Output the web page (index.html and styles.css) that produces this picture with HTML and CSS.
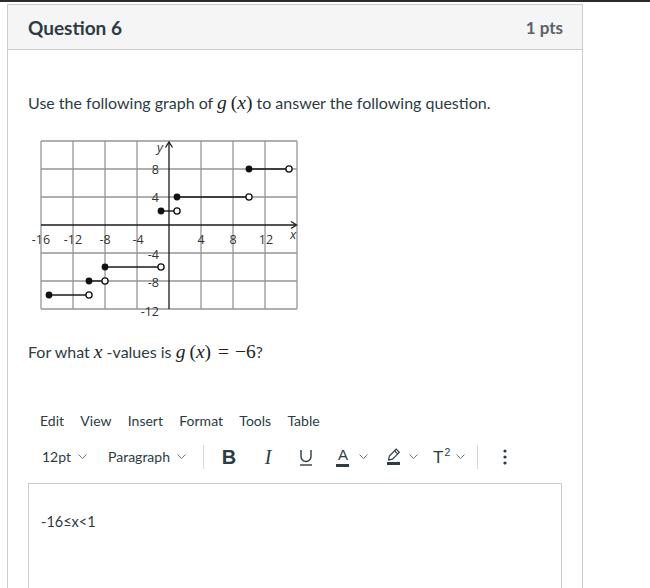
FILE: index.html
```html
<!DOCTYPE html>
<html>
<head>
<meta charset="utf-8">
<title>Question 6</title>
<link rel="stylesheet" href="styles.css">
</head>
<body>
<div class="topbar"></div>
<div class="page">
  <div class="card">
    <div class="card-header">
      <h2 class="q-title">Question 6</h2>
      <span class="pts">1 pts</span>
    </div>
    <div class="card-body">
      <p class="text p1">Use the following graph of <span class="math"><i class="mi">g</i><span class="mo lp">(</span><i class="mi">x</i><span class="mo">)</span></span> to answer the following question.</p>

      <svg class="graph" width="282" height="190" viewBox="28 135 282 190" xmlns="http://www.w3.org/2000/svg">
        <g class="grid">
          <line x1="41" y1="142" x2="41" y2="310"/>
          <line x1="73" y1="142" x2="73" y2="310"/>
          <line x1="105" y1="142" x2="105" y2="310"/>
          <line x1="137" y1="142" x2="137" y2="310"/>
          <line x1="201" y1="142" x2="201" y2="310"/>
          <line x1="233" y1="142" x2="233" y2="310"/>
          <line x1="265" y1="142" x2="265" y2="310"/>
          <line x1="297" y1="142" x2="297" y2="310"/>
          <line x1="41" y1="142" x2="297" y2="142"/>
          <line x1="41" y1="170" x2="297" y2="170"/>
          <line x1="41" y1="198" x2="297" y2="198"/>
          <line x1="41" y1="254" x2="297" y2="254"/>
          <line x1="41" y1="282" x2="297" y2="282"/>
          <line x1="41" y1="310" x2="297" y2="310"/>
        </g>
        <g class="labels">
          <text x="41" y="245" text-anchor="middle">-16</text>
          <text x="73" y="245" text-anchor="middle">-12</text>
          <text x="105" y="245" text-anchor="middle">-8</text>
          <text x="138" y="245" text-anchor="middle">-4</text>
          <text x="201" y="245" text-anchor="middle">4</text>
          <text x="233" y="245" text-anchor="middle">8</text>
          <text x="266" y="245" text-anchor="middle">12</text>
          <text x="159" y="175" text-anchor="end">8</text>
          <text x="159" y="203" text-anchor="end">4</text>
          <text x="159" y="260" text-anchor="end">-4</text>
          <text x="159" y="288" text-anchor="end">-8</text>
          <text x="159" y="317" text-anchor="end">-12</text>
          <text class="var" x="293" y="240" text-anchor="middle">x</text>
          <text class="var" x="160" y="153" text-anchor="middle">y</text>
        </g>
        <g class="axes">
          <line x1="41" y1="226" x2="296" y2="226"/>
          <path d="M291 222.5 L296.5 226 L291 229.5"/>
          <line x1="169" y1="310" x2="169" y2="143"/>
          <path d="M165.5 148.5 L169 143 L172.5 148.5"/>
        </g>
        <g class="segs">
          <line x1="249" y1="170" x2="289" y2="170"/>
          <line x1="177" y1="198" x2="249" y2="198"/>
          <line x1="161" y1="212" x2="177" y2="212"/>
          <line x1="105" y1="268" x2="161" y2="268"/>
          <line x1="89" y1="282" x2="105" y2="282"/>
          <line x1="49" y1="296" x2="89" y2="296"/>
        </g>
        <g class="closed">
          <circle cx="249" cy="170" r="3.4"/>
          <circle cx="177" cy="198" r="3.4"/>
          <circle cx="161" cy="212" r="3.4"/>
          <circle cx="105" cy="268" r="3.4"/>
          <circle cx="89" cy="282" r="3.4"/>
          <circle cx="49" cy="296" r="3.4"/>
        </g>
        <g class="open">
          <circle cx="289" cy="170" r="3.1"/>
          <circle cx="249" cy="198" r="3.1"/>
          <circle cx="177" cy="212" r="3.1"/>
          <circle cx="161" cy="268" r="3.1"/>
          <circle cx="105" cy="282" r="3.1"/>
          <circle cx="89" cy="296" r="3.1"/>
        </g>
      </svg>

      <p class="text p2">For what <span class="math"><i class="mi">x</i></span> -values is <span class="math"><i class="mi">g</i><span class="mo lp">(</span><i class="mi">x</i><span class="mo">)</span><span class="mo rel">=</span><span class="mo">−6</span></span>?</p>

      <div class="menubar">
        <span class="menu-item">Edit</span>
        <span class="menu-item">View</span>
        <span class="menu-item">Insert</span>
        <span class="menu-item">Format</span>
        <span class="menu-item">Tools</span>
        <span class="menu-item">Table</span>
      </div>

      <div class="toolbar">
        <span class="tb-text size">12pt</span>
        <svg class="chev ch-size" width="9" height="5" viewBox="0 0 9 5"><path d="M0.5 0.5 L4.5 4.5 L8.5 0.5"/></svg>
        <span class="tb-text para">Paragraph</span>
        <svg class="chev ch-para" width="9" height="5" viewBox="0 0 9 5"><path d="M0.5 0.5 L4.5 4.5 L8.5 0.5"/></svg>
        <span class="divider d1"></span>
        <span class="ic ic-b">B</span>
        <span class="ic ic-i">I</span>
        <svg class="ic ic-u" width="16" height="17" viewBox="0 0 16 17"><path d="M3 1 V7.5 A5 5 0 0 0 13 7.5 V1" fill="none"/><line x1="2" y1="16" x2="14" y2="16"/></svg>
        <span class="ic ic-a"><span class="a-glyph">A</span><span class="a-bar"></span></span>
        <svg class="chev ch-a" width="9" height="5" viewBox="0 0 9 5"><path d="M0.5 0.5 L4.5 4.5 L8.5 0.5"/></svg>
        <svg class="ic ic-hl" width="15" height="18" viewBox="0 0 15 18"><path d="M10.2 1.2 L13.3 4.3 L6.5 11.1 L2.6 12 L3.4 8 Z" fill="none"/><line x1="8.6" y1="2.8" x2="11.7" y2="5.9"/><rect x="1" y="14" width="13" height="3" class="hl-bar"/></svg>
        <svg class="chev ch-hl" width="9" height="5" viewBox="0 0 9 5"><path d="M0.5 0.5 L4.5 4.5 L8.5 0.5"/></svg>
        <span class="ic ic-t">T<sup class="sup2">2</sup></span>
        <svg class="chev ch-t" width="9" height="5" viewBox="0 0 9 5"><path d="M0.5 0.5 L4.5 4.5 L8.5 0.5"/></svg>
        <span class="divider d2"></span>
        <svg class="ic ic-more" width="4" height="16" viewBox="0 0 4 16"><circle cx="2" cy="2" r="1.6"/><circle cx="2" cy="8" r="1.6"/><circle cx="2" cy="14" r="1.6"/></svg>
      </div>

      <div class="editor">
        <p class="answer">-16≤x&lt;1</p>
      </div>
    </div>
  </div>
</div>
</body>
</html>
```

FILE: styles.css
```css
html, body {
  margin: 0;
  padding: 0;
  background: #ffffff;
}

body {
  font-family: Lato, "Open Sans", "Liberation Sans", sans-serif;
  color: #2d3b45;
  overflow: hidden;
}

.topbar {
  height: 2px;
  background: #2b2b2b;
}

.page {
  padding: 2px 0 0 7px;
}

.card {
  width: 574px;
  border: 1px solid #c7cdd1;
  border-bottom: none;
  height: 700px;
  background: #fff;
}

.card-header {
  height: 45px;
  box-sizing: border-box;
  background: #f5f5f5;
  border-bottom: 1px solid #c7cdd1;
  padding: 0 19px 0 20px;
  display: flex;
  align-items: center;
  justify-content: space-between;
}

.q-title {
  margin: 0;
  font-size: 19px;
  font-weight: 700;
  color: #2d3b45;
}

.pts {
  font-size: 17px;
  font-weight: 700;
  color: #5b6268;
}

.card-body {
  padding: 0 20px;
}

.text {
  margin: 0;
  font-size: 16px;
  line-height: 24px;
  color: #2d3b45;
}

.p1 {
  margin-top: 41px;
}

.p2 {
  margin-top: 16px;
}

.math {
  font-family: "Liberation Serif", "DejaVu Serif", serif;
  font-size: 19.5px;
  color: #222;
}

.mi {
  font-style: italic;
}

.mo {
  font-style: normal;
}

.lp {
  margin-left: 4px;
}

.rel {
  margin: 0 6px 0 7px;
}

.graph {
  display: block;
  margin-top: 19px;
}

.grid line {
  stroke: #969696;
  stroke-width: 1.3;
}

.axes line, .axes path {
  stroke: #1a1a1a;
  stroke-width: 1.3;
  fill: none;
}

.labels text {
  font-family: "Open Sans", "DejaVu Sans", sans-serif;
  font-size: 12.5px;
  fill: #333;
}

.labels .var {
  font-style: italic;
  font-size: 13px;
}

.segs line {
  stroke: #1a1a1a;
  stroke-width: 1.4;
}

.closed circle {
  fill: #111;
}

.open circle {
  fill: #fff;
  stroke: #111;
  stroke-width: 1.3;
}

.menubar {
  margin-top: 41px;
  height: 30px;
  display: flex;
  align-items: center;
  padding-left: 12px;
  gap: 16.3px;
}

.menu-item {
  font-size: 14px;
  color: #2d3b45;
}

.toolbar {
  margin-top: 4px;
  height: 36px;
  display: flex;
  align-items: center;
}

.tb-text {
  font-size: 14px;
  color: #2d3b45;
  line-height: 20px;
}

.size {
  margin-left: 14px;
}

.para {
  margin-left: 21px;
}

.chev {
  display: block;
  margin-top: -2px;
}

.chev path {
  fill: none;
  stroke: #6f7a82;
  stroke-width: 1;
}

.ch-size { margin-left: 7px; }
.ch-para { margin-left: 7px; }
.ch-a { margin-left: 9px; }
.ch-hl { margin-left: 8px; }
.ch-t { margin-left: 3px; }

.divider {
  display: block;
  width: 1px;
  height: 24px;
  background: #d4d8db;
}

.d1 { margin-left: 17px; }
.d2 { margin-left: 12px; }

.ic {
  display: flex;
  align-items: center;
  justify-content: center;
  color: #2d3b45;
  flex: none;
}

.ic-b {
  width: 16px;
  margin-left: 17px;
  font-family: "Liberation Sans", Arial, sans-serif;
  font-weight: 700;
  font-size: 20px;
  line-height: 20px;
}

.ic-i {
  width: 10px;
  margin-left: 26px;
  font-family: "Liberation Serif", serif;
  font-style: italic;
  font-size: 20px;
  line-height: 20px;
}

.ic-u {
  margin-left: 25px;
}

.ic-u path, .ic-u line {
  stroke: #2d3b45;
  stroke-width: 1.4;
  fill: none;
}

.ic-a {
  width: 14px;
  margin-left: 22px;
  flex-direction: column;
  align-items: center;
}

.a-glyph {
  font-family: "Liberation Sans", Arial, sans-serif;
  font-size: 15px;
  line-height: 14px;
  color: #2d3b45;
}

.a-bar {
  display: block;
  width: 13px;
  height: 3px;
  margin-top: 2px;
  background: #2d3b45;
}

.ic-hl {
  margin-left: 18px;
}

.ic-hl path, .ic-hl line {
  stroke: #2d3b45;
  stroke-width: 1.2;
}

.hl-bar {
  fill: #2d3b45;
}

.ic-t {
  margin-left: 15px;
  font-family: "Liberation Sans", Arial, sans-serif;
  font-size: 17px;
  line-height: 20px;
  width: 20px;
  justify-content: flex-start;
  align-items: flex-start;
  padding-top: 2px;
}

.sup2 {
  font-size: 10.5px;
  line-height: 10px;
  margin-left: 1px;
  margin-top: -1px;
}

.ic-more {
  margin-left: 25px;
}

.ic-more circle {
  fill: #2d3b45;
}

.editor {
  margin-top: 8px;
  height: 160px;
  border: 1px solid #c7cdd1;
  border-bottom: none;
  padding: 0 12px;
}

.answer {
  margin: 28px 0 0;
  font-size: 14.5px;
  line-height: 20px;
  color: #2d3b45;
}
```
